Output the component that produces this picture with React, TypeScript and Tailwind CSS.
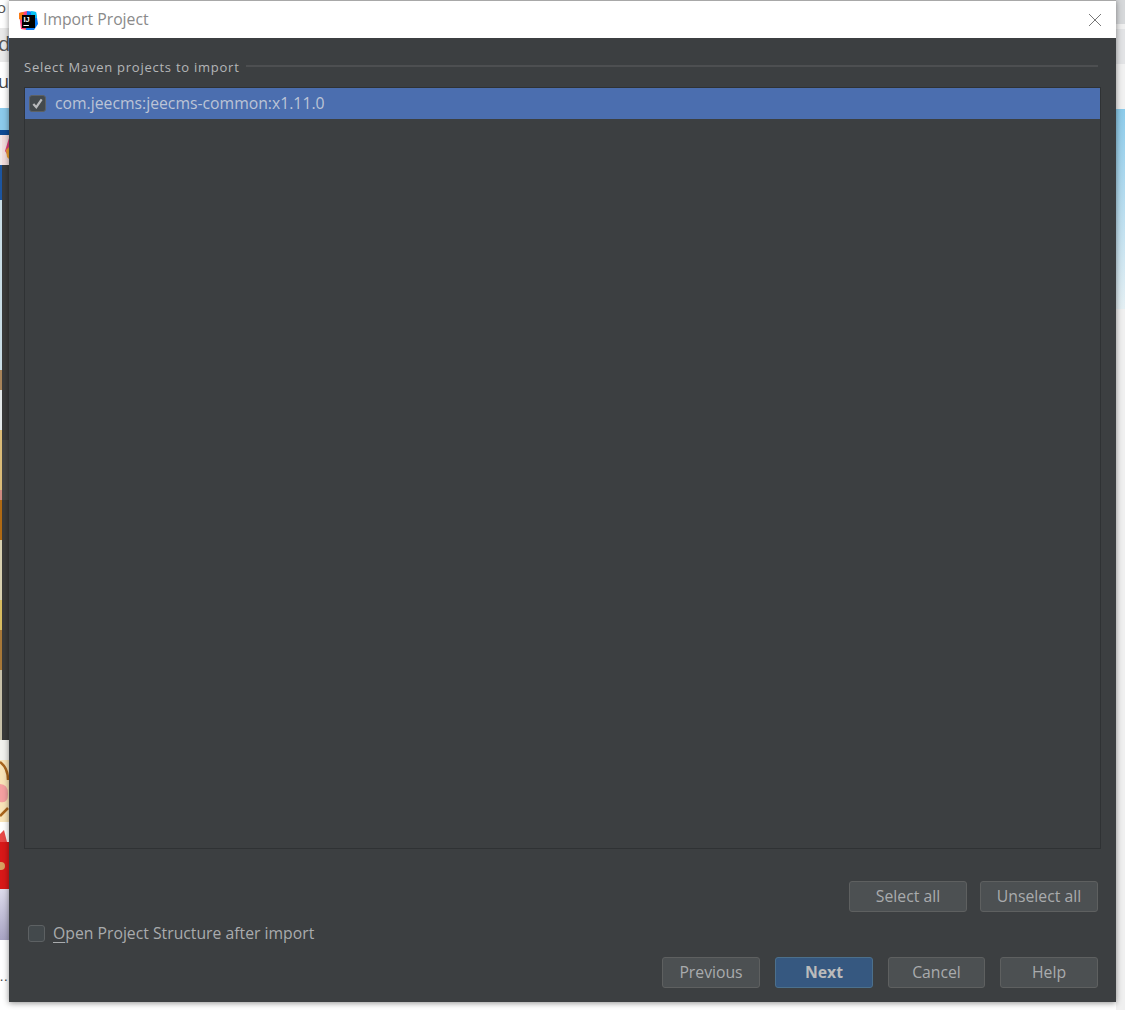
import React from "react";

const font = "font-['Open_Sans','Noto_Sans',sans-serif]";

function Btn({ label, w, primary }: { label: string; w: string; primary?: boolean }) {
  return (
    <button
      className={`${w} h-[31px] pt-[1px] rounded-[3px] border text-[15.75px] leading-none flex items-center justify-center ${
        primary
          ? "border-[#4c708c] bg-[#365880] text-[#bbbbbb] font-bold"
          : "border-[#5e6060] bg-[#4c5052] text-[#a9abad]"
      }`}
    >
      {label}
    </button>
  );
}

function LeftStrip() {
  return (
    <div className={`w-[9px] h-full flex flex-col ${font}`}>
      <div className="h-[28px] bg-white text-[15px] text-[#555] overflow-hidden leading-[14px] whitespace-nowrap -indent-[3px]">o</div>
      <div className="h-[34px] bg-[#e9e9e9] text-[20px] text-[#555] overflow-hidden leading-[32px] whitespace-nowrap -indent-[2px]">d</div>
      <div className="h-[46px] bg-white text-[18px] text-[#444] overflow-hidden leading-[38px] whitespace-nowrap -indent-[2px]">u</div>
      <div className="h-[22px] bg-[#8ccbec]" />
      <div className="h-[610px] flex">
        <div className="w-[2px] flex flex-col">
          <div className="h-[5px] bg-[#0d4a94]" />
          <div className="h-[30px] bg-[#f0e8e8]" />
          <div className="h-[35px] bg-[#1c55a0]" />
          <div className="h-[170px] bg-[#c9dde6]" />
          <div className="h-[20px] bg-[#a8845a]" />
          <div className="h-[40px] bg-[#e4e8e8]" />
          <div className="h-[60px] bg-[#dcbc78]" />
          <div className="h-[10px] bg-[#d08a80]" />
          <div className="h-[40px] bg-[#b06a14]" />
          <div className="h-[60px] bg-[#d8d0b0]" />
          <div className="h-[30px] bg-[#d8bc60]" />
          <div className="h-[40px] bg-[#a87838]" />
          <div className="flex-1 bg-[#c8c0a8]" />
        </div>
        <div className="w-[7px] flex flex-col bg-[#3a3a3a]">
          <div className="h-[5px] bg-[#0d4a94]" />
          <div className="h-[30px] bg-[#f2dcdc] relative overflow-hidden">
            <svg viewBox="0 0 7 30" className="absolute inset-0 w-full h-full">
              <path d="M7 3 L3 16 L7 22 Z" fill="#e0407a" />
              <path d="M4 15 L7 12 L7 24 L5 22 Z" fill="#f0a030" />
            </svg>
          </div>
          <div className="h-[275px]" />
          <div className="h-[60px] bg-[#454545]" />
          <div className="flex-1" />
        </div>
      </div>
      <div className="h-[20px] bg-[#f2f2ee]" />
      <div className="h-[62px] bg-[#f8e4b8] relative overflow-hidden">
        <svg viewBox="0 0 9 62" className="absolute inset-0 w-full h-full">
          <path d="M0 24 Q8 24 8 34 Q8 44 0 42 Z" fill="#f4a0a0" />
          <path d="M0 2 Q8 8 8 20 M8 48 L0 56" stroke="#a8641c" strokeWidth="2.5" fill="none" />
        </svg>
      </div>
      <div className="h-[20px] bg-white relative overflow-hidden">
        <svg viewBox="0 0 9 20" className="absolute inset-0 w-full h-full">
          <path d="M0 12 L4 8 L7 20 L0 20 Z" fill="#e84848" />
        </svg>
      </div>
      <div className="h-[47px] bg-[#d81818] relative overflow-hidden">
        <svg viewBox="0 0 9 47" className="absolute inset-0 w-full h-full">
          <circle cx="1" cy="24" r="4" fill="#d8a060" />
        </svg>
      </div>
      <div className="h-[51px] bg-gradient-to-b from-[#dedcec] to-[#a8a4c4]" />
      <div className="flex-1 bg-white relative">
        <div className="text-[12px] leading-none text-[#333] mt-[31px] tracking-[1px]">..</div>
      </div>
    </div>
  );
}

function RightStrip() {
  return (
    <div className="w-[9px] h-full flex flex-col">
      <div className="h-[24px] bg-[#d6d8da]" />
      <div className="h-[5px] bg-[#f0f0f0]" />
      <div className="h-[35px] bg-[#e2e3e5]" />
      <div className="h-[45px] bg-[#f1f1f1]" />
      <div className="h-[200px] bg-gradient-to-b from-[#8ccbea] to-[#e4eff3]" />
      <div className="flex-1 bg-[#f0f0f0]" />
    </div>
  );
}

export default function App() {
  return (
    <div className={`relative w-[1125px] h-[1010px] bg-white overflow-hidden flex justify-between ${font}`}>
      <LeftStrip />
      <RightStrip />

      <div className="absolute left-[9px] top-0 w-[1107px] h-[1002px] flex flex-col bg-[#3c3f41] border-t border-[#a8a8a8] shadow-[0_1px_6px_rgba(0,0,0,0.45)]">
        <div className="h-[37px] bg-white flex items-center pl-[9px] pr-[14px] shrink-0">
          <svg viewBox="0 0 20 20" className="w-[20px] h-[20px] shrink-0">
            <path d="M1 3 L9 1 L9 20 L3 19 Z" fill="#fc3f7a" />
            <path d="M1 3 L6 2 L4 10 L1 9 Z" fill="#f97a12" />
            <path d="M9 1 L18 2 L20 14 L16 20 L8 20 Z" fill="#087cfa" />
            <path d="M13 1 L18 2 L19 8 L13 8 Z" fill="#07c3f2" />
            <rect x="4" y="5" width="13" height="13" fill="#000000" />
            <text x="5.4" y="12" fontSize="7.5" fontWeight="700" fill="#ffffff" fontFamily="'Liberation Sans',sans-serif">IJ</text>
            <rect x="5.4" y="15" width="5.5" height="1" fill="#ffffff" />
          </svg>
          <span className="ml-[5px] text-[15.75px] text-[#8a8a8a] leading-none">Import Project</span>
          <svg viewBox="0 0 14 14" className="ml-auto w-[14px] h-[14px] shrink-0" fill="none" stroke="#777777" strokeWidth="1">
            <path d="M1 1 L13 13 M13 1 L1 13" />
          </svg>
        </div>

        <div className="flex-1 flex flex-col pl-[15px] pr-[15px] pb-[14px] min-h-0">
          <div className="h-[20px] mt-[19px] flex items-center gap-[6px] pr-[3px]">
            <span className="text-[13px] tracking-[0.75px] text-[#b4b6b8] leading-none whitespace-nowrap">Select Maven projects to import</span>
            <div className="flex-1 h-[2px] mb-[2px] bg-[#4d4f51]" />
          </div>

          <div className="mt-[10px] h-[762px] border border-[#2f3234] shrink-0">
            <div className="h-[31px] bg-[#4b6eaf] flex items-center pl-[4px]">
              <div className="w-[17px] h-[17px] rounded-[3px] bg-[#43494c] border border-[#5d6163] flex items-center justify-center">
                <svg viewBox="0 0 14 14" className="w-[13px] h-[13px]" fill="none" stroke="#b8babc" strokeWidth="2.4">
                  <path d="M2.5 7.5 L5.7 11 L11.5 2.5" />
                </svg>
              </div>
              <span className="ml-[9px] pt-[1px] text-[15.75px] text-[#bcc4d6] leading-none">com.jeecms:jeecms-common:x1.11.0</span>
            </div>
          </div>

          <div className="mt-[32px] flex justify-end gap-[13px] pr-[3px]">
            <Btn label="Select all" w="w-[118px]" />
            <Btn label="Unselect all" w="w-[118px]" />
          </div>

          <div className="mt-[12px] h-[19px] flex items-center pl-[4px]">
            <div className="w-[17px] h-[17px] rounded-[3px] bg-[#43494c] border border-[#5d6163]" />
            <span className="ml-[8px] text-[15.75px] text-[#a9abad] leading-none whitespace-nowrap">
              <span className="underline underline-offset-[3px]">O</span>pen Project Structure after import
            </span>
          </div>

          <div className="mt-auto flex justify-end gap-[15px] pr-[3px]">
            <Btn label="Previous" w="w-[98px]" />
            <Btn label="Next" w="w-[98px]" primary />
            <Btn label="Cancel" w="w-[97px]" />
            <Btn label="Help" w="w-[98px]" />
          </div>
        </div>
      </div>
    </div>
  );
}
